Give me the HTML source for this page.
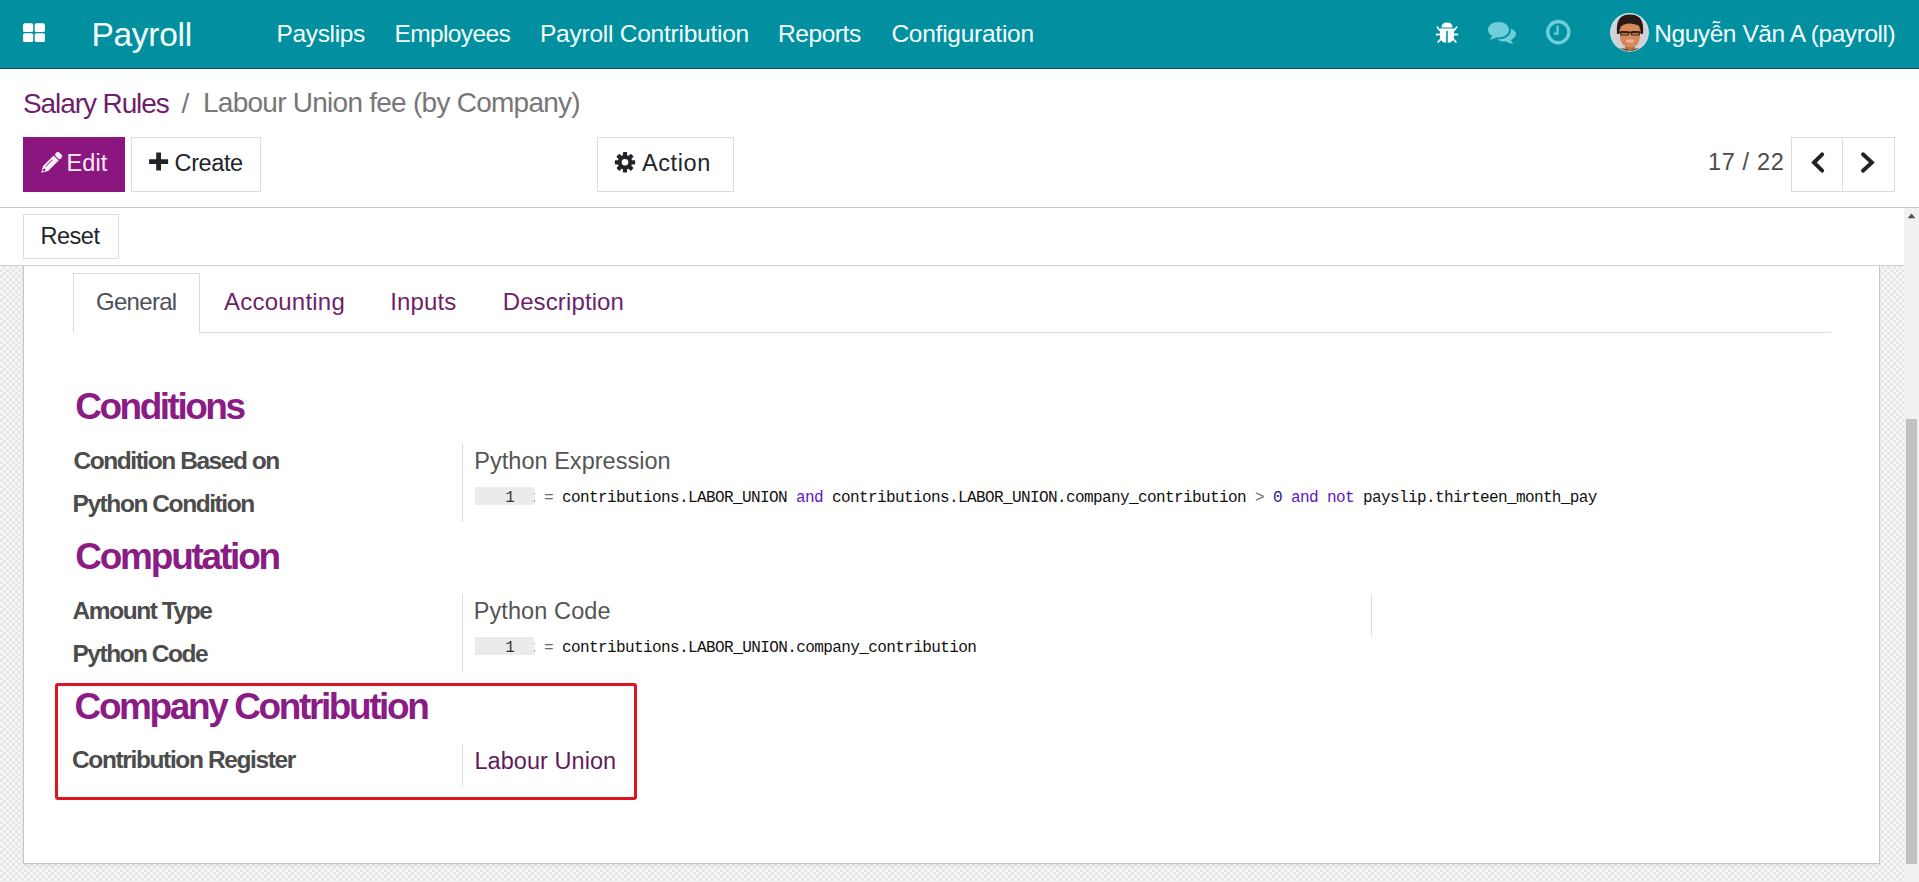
<!DOCTYPE html>
<html><head><meta charset="utf-8">
<style>
html,body{margin:0;padding:0;width:1919px;height:882px;overflow:hidden;background:#fff;}
body{position:relative;font-family:'Liberation Sans', sans-serif;}
.t{position:absolute;white-space:pre;}
.a{position:absolute;box-sizing:border-box;}
.kw{color:#5b17c4;}
.num{color:#2c1690;}
.op{color:#6a6a6a;}
</style></head><body>
<!-- navbar -->
<div class="a" style="left:0;top:0;width:1919px;height:68px;background:#0290a0;"></div>
<div class="a" style="left:0;top:66px;width:1919px;height:2px;background:#0a8c9c;"></div>
<div class="a" style="left:0;top:68px;width:1919px;height:1px;background:#08535d;"></div>
<svg class="a" style="left:0;top:0" width="1919" height="68" viewBox="0 0 1919 68">
 <g fill="#ffffff">
  <rect x="23" y="23.3" width="10.2" height="8.8" rx="1.6"/>
  <rect x="34.7" y="23.3" width="10.2" height="8.8" rx="1.6"/>
  <rect x="23" y="33.2" width="10.2" height="8.8" rx="1.6"/>
  <rect x="34.7" y="33.2" width="10.2" height="8.8" rx="1.6"/>
 </g>
 <!-- bug -->
 <g fill="#ffffff">
  <path d="M1441.5 27.5 Q1441.5 22.5 1447 22.5 Q1452.5 22.5 1452.5 27.5 Z"/>
  <path d="M1440 28.6 H1454 V36 Q1454 42.5 1447.8 42.8 V31 H1446.2 V42.8 Q1440 42.5 1440 36 Z"/>
  <path d="M1440.5 30 L1437.5 26 L1436.3 27 L1439.5 31.5 Z"/>
  <path d="M1453.5 30 L1456.5 26 L1457.7 27 L1454.5 31.5 Z"/>
  <rect x="1435.8" y="33.6" width="5" height="1.8"/>
  <rect x="1453.2" y="33.6" width="5" height="1.8"/>
  <path d="M1440.6 38 L1437 42 L1438.3 43 L1441.6 39.6 Z"/>
  <path d="M1453.4 38 L1457 42 L1455.7 43 L1452.4 39.6 Z"/>
 </g>
 <!-- chat -->
 <g fill="#6fcfd9">
  <path d="M1498.5 22 C1492.5 22 1488 25.5 1488 29.7 C1488 32.3 1489.6 34.4 1492.2 35.8 C1491.6 37.3 1490.5 38.8 1489.6 39.6 C1492.6 39.3 1495 38 1496.5 37.2 C1497.2 37.3 1497.8 37.4 1498.5 37.4 C1504.5 37.4 1509 34 1509 29.7 C1509 25.5 1504.5 22 1498.5 22 Z"/>
  <path d="M1510.6 28.5 C1510.9 29 1511 29.4 1511 30 C1511 35 1505.5 39.3 1499 39.3 C1498.3 39.3 1497.7 39.3 1497 39.2 C1498.8 40.8 1501.5 41.6 1504.4 41.6 C1505 41.6 1505.6 41.6 1506.2 41.5 C1507.8 42.5 1510 43.6 1513.6 43.8 C1512.6 43 1511.6 41.6 1511 40 C1514 38.6 1516 36.4 1516 33.6 C1516 31.4 1513.8 29.6 1510.6 28.5 Z"/>
 </g>
 <!-- clock -->
 <circle cx="1558.3" cy="32.1" r="10.6" fill="none" stroke="#6fcfd9" stroke-width="3.4"/>
 <path d="M1557.6 25.8 V33.6 H1553.8" fill="none" stroke="#6fcfd9" stroke-width="2.2"/>
 <!-- avatar -->
 <defs><clipPath id="av"><circle cx="1629.5" cy="32.4" r="18.4"/></clipPath></defs>
 <circle cx="1629.5" cy="32.4" r="19.4" fill="#cfe9ec"/>
 <circle cx="1629.5" cy="32.4" r="18.4" fill="#d2d0d6"/>
 <g clip-path="url(#av)">
  <path d="M1617 34 Q1615 14 1630 14.6 Q1645 14 1643 34 L1641 34 Q1641 24 1630 21.5 Q1619 24 1619 34 Z" fill="#2b1a15"/>
  <ellipse cx="1630" cy="24.5" rx="11.5" ry="8.5" fill="#2b1a15"/>
  <path d="M1625 44 H1635 V52 H1625 Z" fill="#b86e45"/>
  <path d="M1620 30 Q1620 21 1630 21.2 Q1640 21 1640 30 L1640 37 Q1639.5 47 1630 47.5 Q1620.5 47 1620 37 Z" fill="#d68a5c"/>
  <path d="M1620 24 Q1624 19.5 1632 20.5 Q1638 21.5 1640 26 Q1634 23 1628 23.5 Q1623 24 1620 27 Z" fill="#2b1a15"/>
  <rect x="1618.5" y="31.6" width="23" height="1.6" fill="#3a2016"/>
  <rect x="1620.5" y="31.6" width="8" height="3.4" rx="1" fill="none" stroke="#3a2016" stroke-width="1.2"/>
  <rect x="1631.5" y="31.6" width="8" height="3.4" rx="1" fill="none" stroke="#3a2016" stroke-width="1.2"/>
  <ellipse cx="1630" cy="41" rx="4" ry="1.7" fill="#efb2a2"/>
  <path d="M1619 48.5 Q1625 47.5 1630 51 Q1635 47.5 1641 48.5 L1643 56 H1617 Z" fill="#5a3a26"/>
 </g>
</svg>
<!-- control panel -->
<div class="a" style="left:0;top:207px;width:1919px;height:1px;background:#c9c9c9;"></div>
<div class="a" style="left:23px;top:137px;width:102px;height:55px;background:#8c1680;"></div>
<div class="a" style="left:131px;top:137px;width:130px;height:55px;border:1px solid #dcdcdc;background:#fff;"></div>
<div class="a" style="left:597px;top:137px;width:137px;height:55px;border:1px solid #dcdcdc;background:#fff;"></div>
<div class="a" style="left:1791px;top:137px;width:104px;height:55px;border:1px solid #dcdcdc;background:#fff;"></div>
<div class="a" style="left:1842px;top:137px;width:1px;height:55px;background:#dcdcdc;"></div>
<svg class="a" style="left:0;top:130px" width="1919" height="70" viewBox="0 130 1919 70">
 <!-- pencil -->
 <g transform="translate(41.3 172.8) rotate(-45)">
  <path d="M0 0 L6 -3.6 H21 V3.6 H6 Z" fill="#fbeefa"/>
  <rect x="22" y="-3.6" width="5" height="7.2" rx="1.6" fill="#fbeefa"/>
  <rect x="7.5" y="-1.8" width="9.5" height="0.9" fill="#8c1680" opacity="0.85"/>
  <rect x="2.6" y="-0.9" width="2.6" height="1.8" fill="#5a0f52"/>
 </g>
 <!-- plus -->
 <path d="M156.2 152.4 H161 V159.2 H168.1 V164 H161 V170.6 H156.2 V164 H149.1 V159.2 H156.2 Z" fill="#212529"/>
 <!-- gear -->
 <g transform="translate(625 162.3)" fill="#212529">
  <circle r="7.2"/>
  <rect x="-2.1" y="-10.2" width="4.2" height="5" rx="0.8" transform="rotate(0)"/>
  <rect x="-2.1" y="-10.2" width="4.2" height="5" rx="0.8" transform="rotate(45)"/>
  <rect x="-2.1" y="-10.2" width="4.2" height="5" rx="0.8" transform="rotate(90)"/>
  <rect x="-2.1" y="-10.2" width="4.2" height="5" rx="0.8" transform="rotate(135)"/>
  <rect x="-2.1" y="-10.2" width="4.2" height="5" rx="0.8" transform="rotate(180)"/>
  <rect x="-2.1" y="-10.2" width="4.2" height="5" rx="0.8" transform="rotate(225)"/>
  <rect x="-2.1" y="-10.2" width="4.2" height="5" rx="0.8" transform="rotate(270)"/>
  <rect x="-2.1" y="-10.2" width="4.2" height="5" rx="0.8" transform="rotate(315)"/>
  <circle r="3.3" fill="#ffffff"/>
 </g>
 <!-- chevrons -->
 <path d="M1822.2 154.3 L1813.9 162.5 L1822.2 170.7" fill="none" stroke="#1f2226" stroke-width="3.9" stroke-linecap="round" stroke-linejoin="miter"/>
 <path d="M1863.0 154.3 L1871.9 162.5 L1863.0 170.7" fill="none" stroke="#1f2226" stroke-width="3.9" stroke-linecap="round" stroke-linejoin="miter"/>
</svg>
<!-- status bar -->
<div class="a" style="left:23px;top:214px;width:96px;height:45px;border:1px solid #dcdcdc;background:#fff;"></div>
<div class="a" style="left:0;top:265px;width:1904px;height:1px;background:#cfcfcf;"></div>
<!-- form bg -->
<div class="a" style="left:0;top:266px;width:1904px;height:616px;background-color:#f7f7f7;background-image:linear-gradient(45deg,#e7e7e7 25%,transparent 25%,transparent 75%,#e7e7e7 75%),linear-gradient(45deg,#e7e7e7 25%,transparent 25%,transparent 75%,#e7e7e7 75%);background-size:6px 6px;background-position:0 0,3px 3px;"></div>
<div class="a" style="left:23px;top:266px;width:1857px;height:598px;background:#fff;border-left:1px solid #c4c4c4;border-right:1px solid #c4c4c4;border-bottom:1px solid #c4c4c4;box-shadow:0 2px 3px rgba(0,0,0,0.06);"></div>
<!-- tabs -->
<div class="a" style="left:73px;top:273px;width:127px;height:60px;border:1px solid #dcdcdc;border-bottom:none;background:#fff;"></div>
<div class="a" style="left:200px;top:332px;width:1631px;height:1px;background:#dcdcdc;"></div>
<!-- field separators -->
<div class="a" style="left:462px;top:443px;width:1px;height:79px;background:#dedede;"></div>
<div class="a" style="left:462px;top:594px;width:1px;height:78px;background:#dedede;"></div>
<div class="a" style="left:1371px;top:594px;width:1px;height:42px;background:#dedede;"></div>
<div class="a" style="left:462px;top:744px;width:1px;height:43px;background:#dedede;"></div>
<!-- code gutters -->
<div class="a" style="left:475px;top:487px;width:59px;height:18px;background:#ebebeb;"></div>
<div class="a" style="left:475px;top:637px;width:59px;height:18px;background:#ebebeb;"></div>
<div class="a" style="left:533.6px;top:492.8px;width:1px;height:1.4px;background:#9a9a9a;"></div>
<div class="a" style="left:533.6px;top:500.2px;width:1px;height:1.6px;background:#9a9a9a;"></div>
<div class="a" style="left:533.6px;top:642.8px;width:1px;height:1.4px;background:#9a9a9a;"></div>
<div class="a" style="left:533.6px;top:650.2px;width:1px;height:1.6px;background:#9a9a9a;"></div>
<!-- red box -->
<div class="a" style="left:55px;top:683px;width:582px;height:117px;border:3px solid #df1420;border-radius:3px;"></div>
<!-- scrollbar -->
<div class="a" style="left:1904px;top:208px;width:15px;height:674px;background:#f1f1f1;"></div>
<div class="a" style="left:1906px;top:419px;width:11px;height:445px;background:#c1c1c1;"></div>
<svg class="a" style="left:1904px;top:208px" width="15" height="20" viewBox="0 0 15 20"><path d="M3.6 10.2 L7.5 5.6 L11.4 10.2 Z" fill="#505050"/></svg>
<div class="t" style="left:91.4px;top:18.0px;font-family:'Liberation Sans', sans-serif;font-weight:normal;font-size:33.5px;line-height:33.5px;letter-spacing:-0.267px;color:#f4ffff">Payroll</div>
<div class="t" style="left:276.5px;top:22.0px;font-family:'Liberation Sans', sans-serif;font-weight:normal;font-size:24.5px;line-height:24.5px;letter-spacing:-0.343px;color:#f4ffff">Payslips</div>
<div class="t" style="left:394.4px;top:22.0px;font-family:'Liberation Sans', sans-serif;font-weight:normal;font-size:24.5px;line-height:24.5px;letter-spacing:-0.6px;color:#f4ffff">Employees</div>
<div class="t" style="left:540.0px;top:22.0px;font-family:'Liberation Sans', sans-serif;font-weight:normal;font-size:24.5px;line-height:24.5px;letter-spacing:-0.242px;color:#f4ffff">Payroll Contribution</div>
<div class="t" style="left:777.9px;top:22.0px;font-family:'Liberation Sans', sans-serif;font-weight:normal;font-size:24.5px;line-height:24.5px;letter-spacing:-0.4px;color:#f4ffff">Reports</div>
<div class="t" style="left:891.4px;top:22.0px;font-family:'Liberation Sans', sans-serif;font-weight:normal;font-size:24.5px;line-height:24.5px;letter-spacing:-0.25px;color:#f4ffff">Configuration</div>
<div class="t" style="left:1654.2px;top:22.0px;font-family:'Liberation Sans', sans-serif;font-weight:normal;font-size:24.5px;line-height:24.5px;letter-spacing:-0.429px;color:#f4ffff">Nguyễn Văn A (payroll)</div>
<div class="t" style="left:23.0px;top:90.0px;font-family:'Liberation Sans', sans-serif;font-weight:normal;font-size:28px;line-height:28px;letter-spacing:-1.091px;color:#6e1f6a">Salary Rules</div>
<div class="t" style="left:181.5px;top:90.0px;font-family:'Liberation Sans', sans-serif;font-weight:normal;font-size:28px;line-height:28px;letter-spacing:0.0px;color:#777777">/</div>
<div class="t" style="left:203.0px;top:89.0px;font-family:'Liberation Sans', sans-serif;font-weight:normal;font-size:28px;line-height:28px;letter-spacing:-0.743px;color:#777777">Labour Union fee (by Company)</div>
<div class="t" style="left:66.5px;top:152.0px;font-family:'Liberation Sans', sans-serif;font-weight:normal;font-size:23.5px;line-height:23.5px;letter-spacing:0.133px;color:#fbeefa">Edit</div>
<div class="t" style="left:174.6px;top:152.0px;font-family:'Liberation Sans', sans-serif;font-weight:normal;font-size:23.5px;line-height:23.5px;letter-spacing:-0.4px;color:#212529">Create</div>
<div class="t" style="left:642.0px;top:152.0px;font-family:'Liberation Sans', sans-serif;font-weight:normal;font-size:23.5px;line-height:23.5px;letter-spacing:0.6px;color:#212529">Action</div>
<div class="t" style="left:1707.9px;top:151.0px;font-family:'Liberation Sans', sans-serif;font-weight:normal;font-size:23.5px;line-height:23.5px;letter-spacing:0.667px;color:#4a4a4a">17 / 22</div>
<div class="t" style="left:40.4px;top:225.0px;font-family:'Liberation Sans', sans-serif;font-weight:normal;font-size:23.5px;line-height:23.5px;letter-spacing:-0.45px;color:#212529">Reset</div>
<div class="t" style="left:96.0px;top:290.0px;font-family:'Liberation Sans', sans-serif;font-weight:normal;font-size:24px;line-height:24px;letter-spacing:-0.7px;color:#4d5156">General</div>
<div class="t" style="left:224.0px;top:290.0px;font-family:'Liberation Sans', sans-serif;font-weight:normal;font-size:24px;line-height:24px;letter-spacing:0.222px;color:#6e1f6a">Accounting</div>
<div class="t" style="left:390.2px;top:290.0px;font-family:'Liberation Sans', sans-serif;font-weight:normal;font-size:24px;line-height:24px;letter-spacing:0.12px;color:#6e1f6a">Inputs</div>
<div class="t" style="left:502.7px;top:290.0px;font-family:'Liberation Sans', sans-serif;font-weight:normal;font-size:24px;line-height:24px;letter-spacing:0.12px;color:#6e1f6a">Description</div>
<div class="t" style="left:75.2px;top:388.0px;font-family:'Liberation Sans', sans-serif;font-weight:bold;font-size:37px;line-height:37px;letter-spacing:-2.489px;color:#8b1b85">Conditions</div>
<div class="t" style="left:75.2px;top:538.0px;font-family:'Liberation Sans', sans-serif;font-weight:bold;font-size:37px;line-height:37px;letter-spacing:-2.22px;color:#8b1b85">Computation</div>
<div class="t" style="left:74.6px;top:688.0px;font-family:'Liberation Sans', sans-serif;font-weight:bold;font-size:37px;line-height:37px;letter-spacing:-2.4px;color:#8b1b85">Company Contribution</div>
<div class="t" style="left:73.5px;top:449.0px;font-family:'Liberation Sans', sans-serif;font-weight:bold;font-size:24.5px;line-height:24.5px;letter-spacing:-1.447px;color:#4c4c4c">Condition Based on</div>
<div class="t" style="left:72.5px;top:492.0px;font-family:'Liberation Sans', sans-serif;font-weight:bold;font-size:24.5px;line-height:24.5px;letter-spacing:-1.427px;color:#4c4c4c">Python Condition</div>
<div class="t" style="left:72.6px;top:599.0px;font-family:'Liberation Sans', sans-serif;font-weight:bold;font-size:24.5px;line-height:24.5px;letter-spacing:-1.44px;color:#4c4c4c">Amount Type</div>
<div class="t" style="left:72.5px;top:642.0px;font-family:'Liberation Sans', sans-serif;font-weight:bold;font-size:24.5px;line-height:24.5px;letter-spacing:-1.5px;color:#4c4c4c">Python Code</div>
<div class="t" style="left:72.0px;top:748.0px;font-family:'Liberation Sans', sans-serif;font-weight:bold;font-size:24.5px;line-height:24.5px;letter-spacing:-1.37px;color:#4c4c4c">Contribution Register</div>
<div class="t" style="left:474.3px;top:450.0px;font-family:'Liberation Sans', sans-serif;font-weight:normal;font-size:23.5px;line-height:23.5px;letter-spacing:0.025px;color:#555555">Python Expression</div>
<div class="t" style="left:473.7px;top:600.0px;font-family:'Liberation Sans', sans-serif;font-weight:normal;font-size:23.5px;line-height:23.5px;letter-spacing:0.1px;color:#555555">Python Code</div>
<div class="t" style="left:474.4px;top:750.0px;font-family:'Liberation Sans', sans-serif;font-weight:normal;font-size:23.5px;line-height:23.5px;letter-spacing:0.055px;color:#5f1c5c">Labour Union</div>
<div class="t" style="left:544.0px;top:490.0px;font-family:'Liberation Mono', monospace;font-weight:normal;font-size:16px;line-height:16px;letter-spacing:-0.603px;color:#111111"><span class="op">=</span> contributions.LABOR_UNION <span class="kw">and</span> contributions.LABOR_UNION.company_contribution <span class="op">&gt;</span> <span class="num">0</span> <span class="kw">and</span> <span class="kw">not</span> payslip.thirteen_month_pay</div>
<div class="t" style="left:544.0px;top:640.0px;font-family:'Liberation Mono', monospace;font-weight:normal;font-size:16px;line-height:16px;letter-spacing:-0.596px;color:#111111"><span class="op">=</span> contributions.LABOR_UNION.company_contribution</div>
<div class="t" style="left:505.3px;top:490.0px;font-family:'Liberation Mono', monospace;font-weight:normal;font-size:16px;line-height:16px;letter-spacing:0.0px;color:#333333">1</div>
<div class="t" style="left:505.3px;top:640.0px;font-family:'Liberation Mono', monospace;font-weight:normal;font-size:16px;line-height:16px;letter-spacing:0.0px;color:#333333">1</div>
</body></html>
